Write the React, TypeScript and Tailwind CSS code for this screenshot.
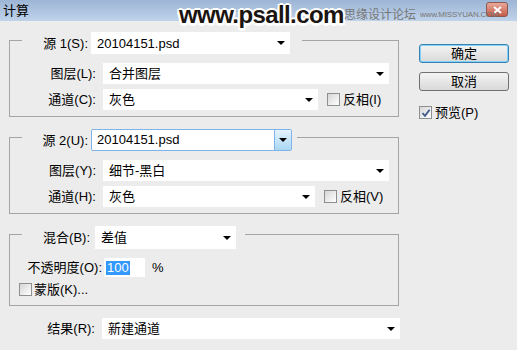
import React from "react";

function Arrow() {
  return <span className="w-0 h-0 border-l-[4px] border-r-[4px] border-t-[4px] border-l-transparent border-r-transparent border-t-black" />;
}

function Select({ value, w, h }: { value: string; w: string; h: string }) {
  return (
    <div className={`flex items-center justify-between bg-white pl-[6px] pr-[5px] ${w} ${h}`}>
      <span>{value}</span>
      <Arrow />
    </div>
  );
}

function Check({ checked }: { checked?: boolean }) {
  return (
    <span className="w-[13px] h-[13px] border border-[#8e8f8f] bg-linear-to-br from-[#d6d6d6] to-white flex items-center justify-center shrink-0">
      {checked && (
        <svg width="10" height="10" viewBox="0 0 10 10">
          <path d="M1.5 5.2 L4 7.8 L8.6 1.8" fill="none" stroke="#3d5a8a" strokeWidth="1.8" />
        </svg>
      )}
    </span>
  );
}

function Row({ label, children }: { label: string; children: React.ReactNode }) {
  return (
    <div className="flex items-center">
      <span className="w-[87px] text-right pr-px">{label}</span>
      <div className="ml-[6px] flex items-center">{children}</div>
    </div>
  );
}

function Source({ n, layer, ch, inv }: { n: string; layer: string; ch: string; inv: string }) {
  const focused = n === "2(U)";
  return (
    <fieldset className="border border-[#a5a5a5] w-[390px] pt-[9px] pb-[6px] flex flex-col gap-[5px]">
      <legend className={`ml-[12px] pt-[6px] ${focused ? "pr-[5px]" : "pr-[12px]"}`}>
        <div className="flex items-center">
          <span className="w-[66px] text-right">源 {n}:</span>
          {focused ? (
            <div className="ml-[3px] w-[201px] h-[22px] flex border border-[#7eb4ea] bg-white rounded-[2px]">
              <span className="flex-1 pl-[5px] leading-[20px]">20104151.psd</span>
              <span className="w-[17px] border-l border-[#7eb4ea] bg-linear-to-b from-[#e6f3fc] to-[#a9d7f3] flex items-center justify-center">
                <Arrow />
              </span>
            </div>
          ) : (
            <div className="ml-[3px]">
              <Select value="20104151.psd" w="w-[199px]" h="h-[22px]" />
            </div>
          )}
        </div>
      </legend>
      <Row label={focused ? "图层(Y):" : "图层(L):"}>
        <Select value={layer} w="w-[286px]" h="h-[21px]" />
      </Row>
      <Row label={focused ? "通道(H):" : "通道(C):"}>
        <Select value={ch} w={focused ? "w-[212px]" : "w-[215px]"} h="h-[21px]" />
        <span className="ml-[9px] flex items-center gap-[3px]">
          <Check />
          <span>{inv}</span>
        </span>
      </Row>
    </fieldset>
  );
}

export default function App() {
  return (
    <div className="w-[517px] h-[350px] bg-[#ececec] text-[13px] leading-none text-black font-['Liberation_Sans','Noto_Sans_CJK_SC',sans-serif] relative overflow-hidden">
      <div className="h-[21px] bg-linear-to-b from-[#9db5d5] to-[#bfd3ea] flex items-center justify-between pl-[3px] pr-[9px]">
        <span className="text-[13px]">计算</span>
        <span className="w-[22px] h-[15px] mt-[-2px] rounded-[3px] border border-[#8a5a50] bg-linear-to-b from-[#e9a99a] to-[#c45a48] flex items-center justify-center">
          <svg width="9" height="8" viewBox="0 0 9 8">
            <path d="M1 1 L8 7 M8 1 L1 7" stroke="#fff" strokeWidth="2" />
          </svg>
        </span>
      </div>

      <div className="absolute left-[179px] top-[3px] text-[24px] font-bold tracking-[-0.6px] text-[#1b1512] [text-shadow:-2px_-1px_0_#fff,2px_-1px_0_#fff,-2px_2px_0_#fff,2px_2px_0_#fff,0_-2px_0_#fff,0_3px_0_#fff]">
        www.psall.com
      </div>
      <div className="absolute left-[344px] top-[9px] flex items-center gap-[4px] text-[#777]">
        <span className="text-[12px]">思缘设计论坛</span>
        <span className="text-[8px] tracking-[-0.2px]">www.MISSYUAN.COM</span>
      </div>

      <div className="flex pl-[9px] pt-[5px]">
        <div className="flex flex-col">
          <Source n="1(S)" layer="合并图层" ch="灰色" inv="反相(I)" />
          <div className="mt-[6px]">
            <Source n="2(U)" layer="细节-黑白" ch="灰色" inv="反相(V)" />
          </div>
          <fieldset className="mt-[6px] border border-[#a5a5a5] w-[390px] pt-[9px] pb-[9px] flex flex-col gap-[6px]">
            <legend className="ml-[12px] pt-[6px] pr-[9px]">
              <div className="flex items-center">
                <span className="w-[68px] text-right">混合(B):</span>
                <div className="ml-[5px]">
                  <Select value="差值" w="w-[141px]" h="h-[23px]" />
                </div>
              </div>
            </legend>
            <div className="flex items-center">
              <span className="w-[92px] text-right">不透明度(O):</span>
              <div className="ml-[2px] w-[41px] h-[19px] bg-white flex items-center pl-[2px]">
                <span className="bg-[#3399ff] text-white px-px h-[14px] leading-[14px]">100</span>
              </div>
              <span className="ml-[7px]">%</span>
            </div>
            <div className="flex items-center ml-[9px] gap-[2px]">
              <Check />
              <span>蒙版(K)...</span>
            </div>
          </fieldset>
          <div className="mt-[12px]">
            <Row label="结果(R):">
              <Select value="新建通道" w="w-[298px]" h="h-[21px]" />
            </Row>
          </div>
        </div>

        <div className="ml-[19px] pt-[18px] flex flex-col">
          <button className="w-[90px] h-[19px] rounded-[3px] border border-[#3c7fb1] shadow-[inset_0_0_0_1px_#7fd3f8] bg-linear-to-b from-[#f4f4f4] to-[#d9d9d9] flex items-center justify-center">
            确定
          </button>
          <button className="mt-[9px] w-[90px] h-[19px] rounded-[3px] border border-[#707070] bg-linear-to-b from-[#f4f4f4] to-[#d9d9d9] flex items-center justify-center">
            取消
          </button>
          <div className="mt-[15px] flex items-center gap-[3px]">
            <Check checked />
            <span>预览(P)</span>
          </div>
        </div>
      </div>
    </div>
  );
}
